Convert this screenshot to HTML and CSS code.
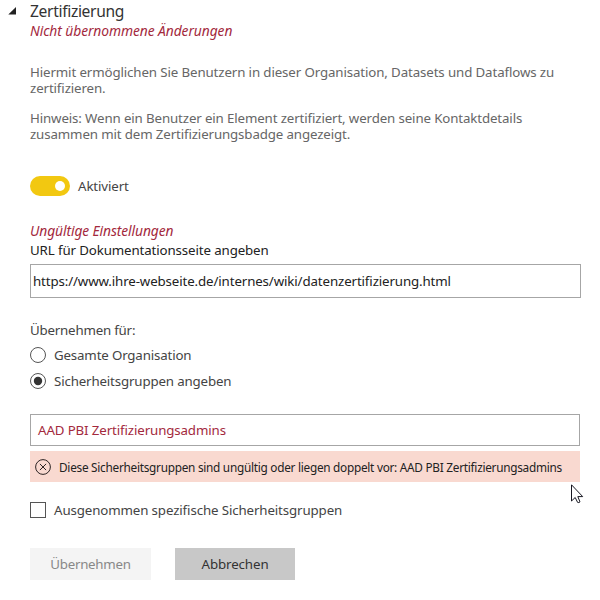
FILE: index.html
```html
<!DOCTYPE html>
<html lang="de">
<head>
<meta charset="utf-8">
<title>Zertifizierung</title>
<link rel="stylesheet" href="styles.css">
</head>
<body>
<main class="setting">
  <header class="heading">
    <svg class="caret" width="8" height="8" viewBox="0 0 8 8"><path d="M8 0V7.5H0.3Z" fill="#222"/></svg>
    <h1 class="title">Zertifizierung</h1>
  </header>
  <p class="status">Nicht übernommene Änderungen</p>
  <p class="intro">Hiermit ermöglichen Sie Benutzern in dieser Organisation, Datasets und Dataflows zu<br>zertifizieren.</p>
  <p class="hint">Hinweis: Wenn ein Benutzer ein Element zertifiziert, werden seine Kontaktdetails<br>zusammen mit dem Zertifizierungsbadge angezeigt.</p>
  <div class="toggle-row"><span class="toggle"><span class="knob"></span></span><span>Aktiviert</span></div>
  <p class="invalid">Ungültige Einstellungen</p>
  <p class="url-label">URL für Dokumentationsseite angeben</p>
  <div class="url-box">https://www.ihre-webseite.de/internes/wiki/datenzertifizierung.html</div>
  <p class="apply-label">Übernehmen für:</p>
  <div class="option all"><svg width="16" height="16" viewBox="0 0 16 16"><circle cx="8" cy="8" r="7.5" fill="#fff" stroke="#555"/></svg><span>Gesamte Organisation</span></div>
  <div class="option groups"><svg width="16" height="16" viewBox="0 0 16 16"><circle cx="8" cy="8" r="7.5" fill="#fff" stroke="#555"/><circle cx="8" cy="8" r="4.2" fill="#333"/></svg><span>Sicherheitsgruppen angeben</span></div>
  <div class="group-box">AAD PBI Zertifizierungsadmins</div>
  <div class="error">
    <svg width="16" height="16" viewBox="0 0 16 16" fill="none" stroke="#2c2424"><circle cx="8" cy="8" r="7.4"/><path d="M4.9 4.9L11.1 11.1M11.1 4.9L4.9 11.1"/></svg>
    <span class="error-text">Diese Sicherheitsgruppen sind ungültig oder liegen doppelt vor: AAD PBI Zertifizierungsadmins</span>
    <svg class="cursor" width="13" height="20" viewBox="0 0 13 20"><path d="M.5.8V17L4.2 13.5L6.6 18.4Q7.8 19 9 17.9L6.8 12.6H11.7Z" fill="#fff" stroke="#171722"/></svg>
  </div>
  <div class="option except"><span class="checkbox"></span><span>Ausgenommen spezifische Sicherheitsgruppen</span></div>
  <div class="actions"><button class="button apply" disabled>Übernehmen</button><button class="button cancel">Abbrechen</button></div>
</main>
</body>
</html>
```
FILE: styles.css
```css
* { box-sizing: border-box; }
body { margin: 0; background: #fff; color: #444; font: 13.3px/16px "Noto Sans", "Open Sans", sans-serif; letter-spacing: -.12px; white-space: nowrap; }
p, h1 { margin: 0; font-weight: 400; }
svg { display: block; flex: none; }
.setting { width: 600px; height: 600px; padding: 1px 19px 0 30px; overflow: hidden; }
.heading { display: flex; height: 20px; margin-left: -22px; gap: 14px; }
.caret { margin-top: 6px; }
.title { font-size: 15.6px; line-height: 20px; letter-spacing: -.33px; color: #333; }
.status { margin-top: 2px; letter-spacing: -.07px; }
.status, .invalid { color: #a3293d; font-size: 13.8px; font-style: italic; }
.intro, .hint { color: #666; }
.intro { margin-top: 25px; }
.hint { margin-top: 14px; letter-spacing: -.13px; }
.toggle-row { display: flex; gap: 8px; height: 20px; line-height: 20px; margin-top: 34px; }
.toggle { display: flex; justify-content: flex-end; align-items: center; width: 40px; height: 20px; padding-right: 5px; border-radius: 10px; background: #f2c811; }
.knob { width: 10px; height: 10px; border-radius: 50%; background: #fff; }
.invalid { margin-top: 27px; letter-spacing: -.09px; }
.url-label { margin-top: 3px; color: #222; }
.url-box, .group-box { display: flex; align-items: center; border: 1px solid #a6a6a6; }
.url-box { height: 34px; margin-top: 6px; padding-left: 2px; color: #222; }
.apply-label { margin-top: 24px; letter-spacing: -.2px; }
.option { display: flex; gap: 8px; height: 16px; margin-top: 9px; }
.all { letter-spacing: -.16px; }
.groups { margin-top: 10px; letter-spacing: -.15px; }
.group-box { width: 550px; height: 32px; margin-top: 25px; padding-left: 7px; color: #a3293d; }
.error { position: relative; display: flex; align-items: center; gap: 8px; width: 550px; height: 31px; margin-top: 5px; padding-left: 5px; background: #f9d9d0; color: #222; font-size: 11.8px; letter-spacing: -.265px; }
.error-text { padding-top: 1px; }
.cursor { position: absolute; left: 541px; top: 33px; }
.except { margin-top: 20px; }
.checkbox { width: 16px; height: 16px; border: 1px solid #555; }
.actions { display: flex; gap: 24px; margin-top: 30px; }
.button { height: 32px; padding: 0; border: 0; font: inherit; letter-spacing: -.1px; }
.apply { width: 121px; background: #f4f4f4; color: #888; letter-spacing: -.25px; }
.cancel { width: 120px; background: #c8c8c8; color: #333; }
```
